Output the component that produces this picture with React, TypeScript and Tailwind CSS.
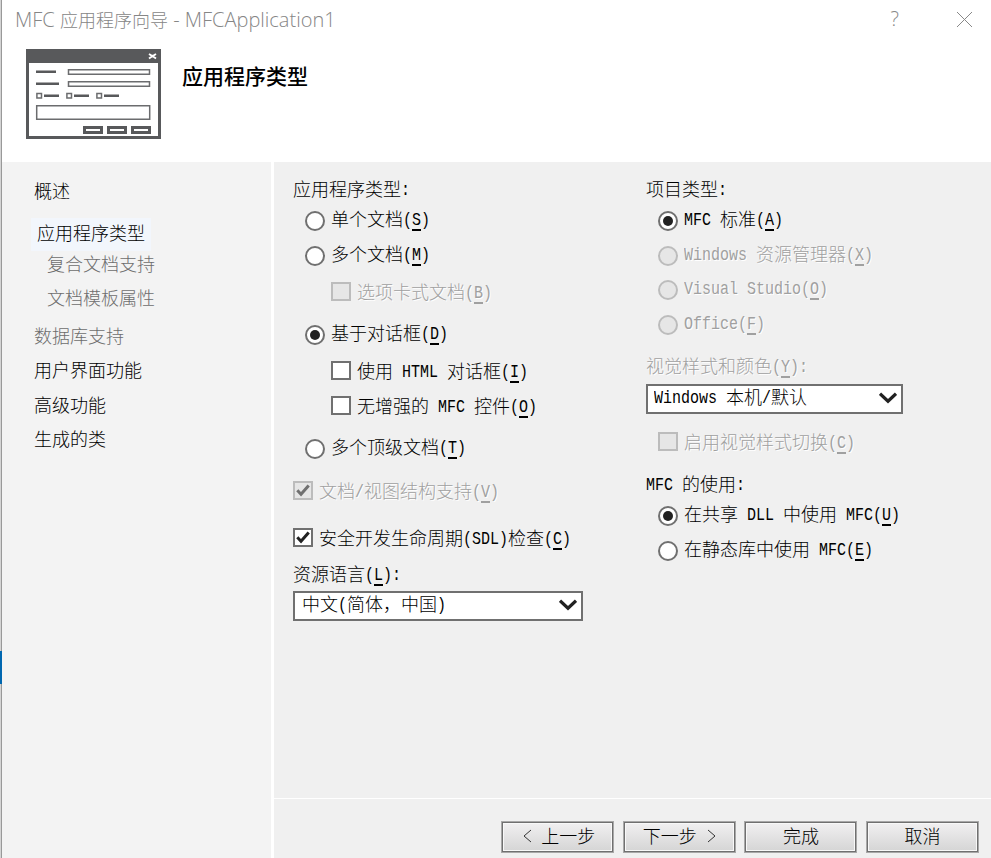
import clsx from "clsx";

interface LabelProps {
  text: string;
  disabled?: boolean;
  className?: string;
}

// "&X" marks the accelerator key, which is drawn underlined
function Label({ text, disabled, className }: LabelProps) {
  const runs = text.match(/&.|[\x20-\x25\x27-\x7e]+|[^\x20-\x7e]+/g) ?? [];

  return (
    <span
      className={clsx(
        "flex h-5 items-center whitespace-pre pb-[2px] font-['Noto_Sans_CJK_SC',sans-serif] text-[18px] font-light leading-5",
        disabled ? "text-[#a0a0a0] [text-shadow:1px_1px_0_#fff]" : "text-black",
        className,
      )}
    >
      {runs.map((run, i) =>
        run[0] === "&" ? (
          <span
            key={i}
            className={clsx(
              "mt-[6px] h-[19px] border-b-2 font-['Liberation_Mono',monospace] text-[15px] leading-[17px]",
              disabled ? "border-[#a0a0a0]" : "border-black",
            )}
          >
            <span className="block scale-y-[1.18]">{run[1]}</span>
          </span>
        ) : /^[\x20-\x7e]/.test(run) ? (
          <span
            key={i}
            className="mt-[5px] scale-y-[1.18] font-['Liberation_Mono',monospace] text-[15px]"
          >
            {run}
          </span>
        ) : (
          <span key={i}>{run}</span>
        ),
      )}
    </span>
  );
}

interface OptionProps {
  label: string;
  checked?: boolean;
  disabled?: boolean;
  className?: string;
}

function Radio({ label, checked, disabled, className }: OptionProps) {
  return (
    <div className={clsx("flex h-5 items-center gap-[6px]", className)}>
      <span
        className={clsx(
          "flex size-5 shrink-0 items-center justify-center rounded-full border-2",
          disabled
            ? "border-[#bcbcbc] bg-[#e6e6e6]"
            : "border-[#707070] bg-white",
        )}
      >
        {checked && <span className="size-[10px] rounded-full bg-[#212121]" />}
      </span>
      <Label text={label} disabled={disabled} className="-mt-1" />
    </div>
  );
}

function Checkbox({ label, checked, disabled, className }: OptionProps) {
  return (
    <div className={clsx("flex h-5 items-center gap-[6px]", className)}>
      <span
        className={clsx(
          "mb-px flex h-[19px] w-5 shrink-0 items-center justify-center border-2",
          disabled
            ? "border-[#bcbcbc] bg-[#e6e6e6]"
            : "border-[#707070] bg-white",
        )}
      >
        {checked && (
          <svg
            width="16"
            height="15"
            viewBox="0 0 16 15"
            fill="none"
            stroke={disabled ? "#707070" : "#212121"}
            strokeWidth="3"
          >
            <path d="M2.3 7.3 6 11.2 13.7 2.4" />
          </svg>
        )}
      </span>
      <Label text={label} disabled={disabled} />
    </div>
  );
}

function Select({ value, className }: { value: string; className?: string }) {
  return (
    <div
      className={clsx(
        "flex h-[30px] items-center justify-between border-2 border-[#707070] bg-white pl-[7px] pr-1",
        className,
      )}
    >
      <Label text={value} className="-mt-1" />
      <svg
        width="18"
        height="12"
        viewBox="0 0 18 12"
        fill="none"
        stroke="#212121"
        strokeWidth="3.2"
        className="-mt-[3px]"
      >
        <path d="M1 1.7 9 9.2 17 1.7" />
      </svg>
    </div>
  );
}

function Button({ children }: { children: React.ReactNode }) {
  return (
    <button className="h-8 w-[113px] border border-[#a8a8a8] bg-[#707070] p-px">
      <span className="flex h-full items-center justify-center gap-[9px] border border-[#f8f8f8] bg-gradient-to-b from-[#f0eff0] to-[#d6d6d6] pb-[3px]">
        {children}
      </span>
    </button>
  );
}

function Arrow({ next }: { next?: boolean }) {
  return (
    <svg
      width="9"
      height="14"
      viewBox="0 0 9 14"
      fill="none"
      stroke="#333"
      className={next ? "ml-px" : "ml-[3px]"}
    >
      <path d={next ? "M1 1 8 7 1 13" : "M8 1 1 7 8 13"} />
    </svg>
  );
}

function DialogPicture() {
  return (
    <svg width="135" height="90" viewBox="0 0 135 90" fill="none">
      <rect x="1.5" y="1.5" width="132" height="87" fill="#fff" stroke="#58595b" strokeWidth="3" />
      <path fill="#58595b" d="M0 0h135v14H0z" />
      <path stroke="#fff" strokeWidth="1.8" d="M123 5l2.5 1.6h2L130 5M123 9.5l2.5-1.8h2l2.5 1.8" />
      <path stroke="#58595b" strokeWidth="2.6" d="M10 22.7h20M10 34.7h23M18 46.8h15M48 46.8h15M78 46.8h15" />
      <g stroke="#6b6c6e" strokeWidth="1.5">
        <path d="M42.5 20.7h81v4.5h-81zM42.5 32.7h81v4.5h-81zM10.7 56.7h113v13.6h-113z" />
        <path d="M10.9 44.4h4.6v4.6h-4.6zM40.9 44.4h4.6v4.6h-4.6zM70.9 44.4h4.6v4.6h-4.6z" />
      </g>
      <path stroke="#58595b" strokeWidth="3" d="M58.5 78.5h17v5h-17zM82.5 78.5h17v5h-17zM106.5 78.5h17v5h-17z" />
    </svg>
  );
}

export default function App() {
  return (
    <div className="flex h-[858px] w-[991px] overflow-hidden bg-white">
      <div className="flex w-[2px] shrink-0 flex-col">
        <div className="h-[651px] border-r border-[#999] bg-[#d4d4d4]" />
        <div className="h-[33px] bg-[#0067b0]" />
        <div className="grow border-r border-[#999] bg-[#d4d4d4]" />
      </div>

      <div className="flex w-[989px] flex-col">
        <header className="h-[162px]">
          <div className="flex h-[38px] items-center justify-between pl-[13px] pr-[18px]">
            <h1 className="whitespace-nowrap font-['Open_Sans',sans-serif] text-[20px] font-light leading-6 text-[#868686]">
              MFC{" "}
              <span className="font-['Noto_Sans_CJK_SC',sans-serif] text-[18px]">
                应用程序向导
              </span>{" "}
              - MFCApplication1
            </h1>
            <div className="flex items-center gap-[57px]">
              <span className="font-['Open_Sans',sans-serif] text-[20px] font-light leading-6 text-[#888]">
                ?
              </span>
              <svg width="17" height="17" viewBox="0 0 17 17" stroke="#888">
                <path d="M1 1l15 15M16 1 1 16" />
              </svg>
            </div>
          </div>
          <div className="flex gap-[21px] pl-[24px] pt-[11px]">
            <DialogPicture />
            <h2 className="pt-[14px] font-['Noto_Sans_CJK_SC',sans-serif] text-[21px] font-medium leading-6 text-black">
              应用程序类型
            </h2>
          </div>
        </header>

        <div className="flex grow">
          <nav className="flex w-[269px] flex-col items-start bg-[#f3f3f3] pl-[32px] pt-[19px]">
            <Label text="概述" />
            <div className="-ml-[3px] mt-[17px] flex h-[33px] w-[120px] items-center bg-[#f2f6fc] pb-[3px] pl-[6px]">
              <Label text="应用程序类型" />
            </div>
            <Label text="复合文档支持" className="ml-[13px] mt-[3px] text-[#6d6d6d]!" />
            <Label text="文档模板属性" className="ml-[13px] mt-[14px] text-[#6d6d6d]!" />
            <Label text="数据库支持" className="mt-[18px] text-[#6d6d6d]!" />
            <Label text="用户界面功能" className="mt-[14px]" />
            <Label text="高级功能" className="mt-[15px]" />
            <Label text="生成的类" className="mt-[14px]" />
          </nav>

          <main className="ml-[3px] flex grow flex-col bg-[#f0f0f0]">
            <div className="flex h-[637px] gap-[63px] border-b border-white pl-[19px] pt-[17px]">
              <section className="w-[290px]">
                <Label text="应用程序类型:" />
                <Radio label="单个文档(&S)" className="ml-3 mt-[12px]" />
                <Radio label="多个文档(&M)" className="ml-3 mt-[15px]" />
                <Checkbox label="选项卡式文档(&B)" disabled className="ml-[38px] mt-[16px]" />
                <Radio label="基于对话框(&D)" checked className="ml-3 mt-[23px]" />
                <Checkbox label="使用 HTML 对话框(&I)" className="ml-[38px] mt-[16px]" />
                <Checkbox label="无增强的 MFC 控件(&O)" className="ml-[38px] mt-[15px]" />
                <Radio label="多个顶级文档(&T)" className="ml-3 mt-[23px]" />
                <Checkbox label="文档/视图结构支持(&V)" checked disabled className="mt-[22px]" />
                <Checkbox label="安全开发生命周期(SDL)检查(&C)" checked className="mt-[27px]" />
                <Label text="资源语言(&L):" className="mt-[16px]" />
                <Select value="中文(简体，中国)" className="mt-[7px]" />
              </section>

              <section className="w-[257px]">
                <Label text="项目类型:" />
                <Radio label="MFC 标准(&A)" checked className="ml-3 mt-[12px]" />
                <Radio label="Windows 资源管理器(&X)" disabled className="ml-3 mt-[15px]" />
                <Radio label="Visual Studio(&O)" disabled className="ml-3 mt-[14px]" />
                <Radio label="Office(&F)" disabled className="ml-3 mt-[15px]" />
                <Label text="视觉样式和颜色(&Y):" disabled className="mt-[21px]" />
                <Select value="Windows 本机/默认" className="mt-[8px] pl-[6px]!" />
                <Checkbox label="启用视觉样式切换(&C)" disabled className="ml-3 mt-[18px]" />
                <Label text="MFC 的使用:" className="mt-[22px]" />
                <Radio label="在共享 DLL 中使用 MFC(&U)" checked className="ml-3 mt-[12px]" />
                <Radio label="在静态库中使用 MFC(&E)" className="ml-3 mt-[15px]" />
              </section>
            </div>

            <footer className="flex grow items-start justify-end gap-[8.6px] pr-3 pt-[22px]">
              <Button>
                <Arrow />
                <Label text="上一步" />
              </Button>
              <Button>
                <Label text="下一步" />
                <Arrow next />
              </Button>
              <Button>
                <Label text="完成" />
              </Button>
              <Button>
                <Label text="取消" />
              </Button>
            </footer>
          </main>
        </div>
      </div>
    </div>
  );
}
